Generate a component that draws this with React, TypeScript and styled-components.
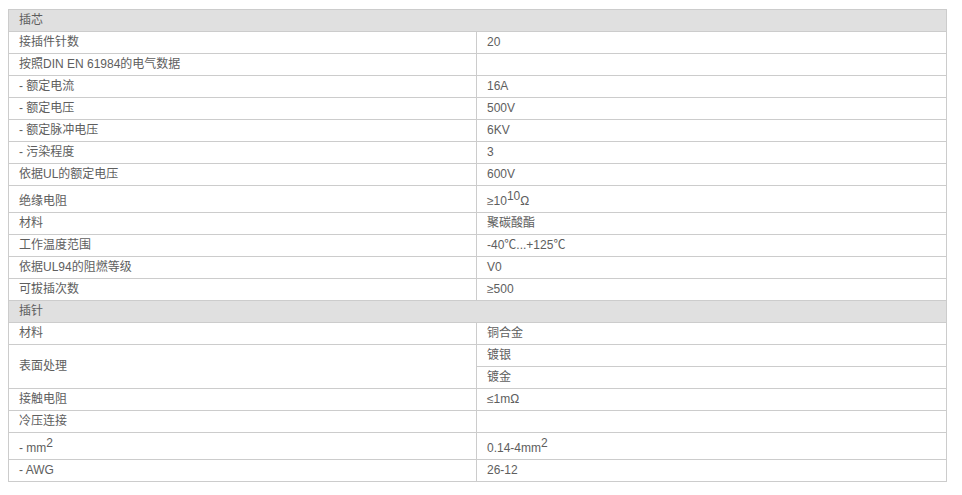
import React from 'react';
import styled, { createGlobalStyle } from 'styled-components';

const GlobalStyle = createGlobalStyle`
  body {
    margin: 9px 8px;
    background: #fff;
    font-family: "Liberation Sans", Arial, "Noto Sans CJK SC", sans-serif;
  }
`;

const SpecTable = styled.table`
  width: 939px;
  border-collapse: collapse;
  table-layout: fixed;
  font-size: 12px;
  color: #5e5e5e;
`;

const LabelCol = styled.col`
  width: 468px;
`;

const Cell = styled.td<{ $tall?: boolean }>`
  border: 1px solid #ccc;
  padding: ${(p) => (p.$tall ? '5px 10px 0' : '0 10px')};
  height: 21px;
  line-height: 21px;
  vertical-align: middle;
  text-align: left;
  white-space: nowrap;
`;

const SectionCell = styled.td`
  border: 1px solid #ccc;
  background: #e0e0e0;
  padding: 0 10px;
  height: 21px;
  line-height: 21px;
  vertical-align: middle;
`;

const Sup = styled.sup`
  font-size: 12px;
  vertical-align: 5px;
  line-height: 0;
`;

type Row =
  | { kind: 'section'; title: string }
  | { kind: 'item'; label: React.ReactNode; value?: React.ReactNode; tall?: boolean }
  | { kind: 'multi'; label: string; values: string[] };

// 표 데이터
const rows: Row[] = [
  { kind: 'section', title: '插芯' },
  { kind: 'item', label: '接插件针数', value: '20' },
  { kind: 'item', label: '按照DIN EN 61984的电气数据' },
  { kind: 'item', label: '- 额定电流', value: '16A' },
  { kind: 'item', label: '- 额定电压', value: '500V' },
  { kind: 'item', label: '- 额定脉冲电压', value: '6KV' },
  { kind: 'item', label: '- 污染程度', value: '3' },
  { kind: 'item', label: '依据UL的额定电压', value: '600V' },
  {
    kind: 'item',
    label: '绝缘电阻',
    value: (
      <>
        ≥10<Sup>10</Sup>Ω
      </>
    ),
    tall: true,
  },
  { kind: 'item', label: '材料', value: '聚碳酸酯' },
  { kind: 'item', label: '工作温度范围', value: '-40℃...+125℃' },
  { kind: 'item', label: '依据UL94的阻燃等级', value: 'V0' },
  { kind: 'item', label: '可拔插次数', value: '≥500' },
  { kind: 'section', title: '插针' },
  { kind: 'item', label: '材料', value: '铜合金' },
  { kind: 'multi', label: '表面处理', values: ['镀银', '镀金'] },
  { kind: 'item', label: '接触电阻', value: '≤1mΩ' },
  { kind: 'item', label: '冷压连接' },
  {
    kind: 'item',
    label: (
      <>
        - mm<Sup>2</Sup>
      </>
    ),
    value: (
      <>
        0.14-4mm<Sup>2</Sup>
      </>
    ),
    tall: true,
  },
  { kind: 'item', label: '- AWG', value: '26-12' },
];

export default function App() {
  return (
    <>
      <GlobalStyle />
      <SpecTable>
        <colgroup>
          <LabelCol />
          <col />
        </colgroup>
        <tbody>
          {rows.map((row, i) => {
            if (row.kind === 'section') {
              return (
                <tr key={i}>
                  <SectionCell colSpan={2}>{row.title}</SectionCell>
                </tr>
              );
            }
            if (row.kind === 'multi') {
              return row.values.map((v, j) => (
                <tr key={`${i}-${j}`}>
                  {j === 0 && <Cell rowSpan={row.values.length}>{row.label}</Cell>}
                  <Cell>{v}</Cell>
                </tr>
              ));
            }
            return (
              <tr key={i}>
                <Cell $tall={row.tall}>{row.label}</Cell>
                <Cell $tall={row.tall}>{row.value}</Cell>
              </tr>
            );
          })}
        </tbody>
      </SpecTable>
    </>
  );
}
